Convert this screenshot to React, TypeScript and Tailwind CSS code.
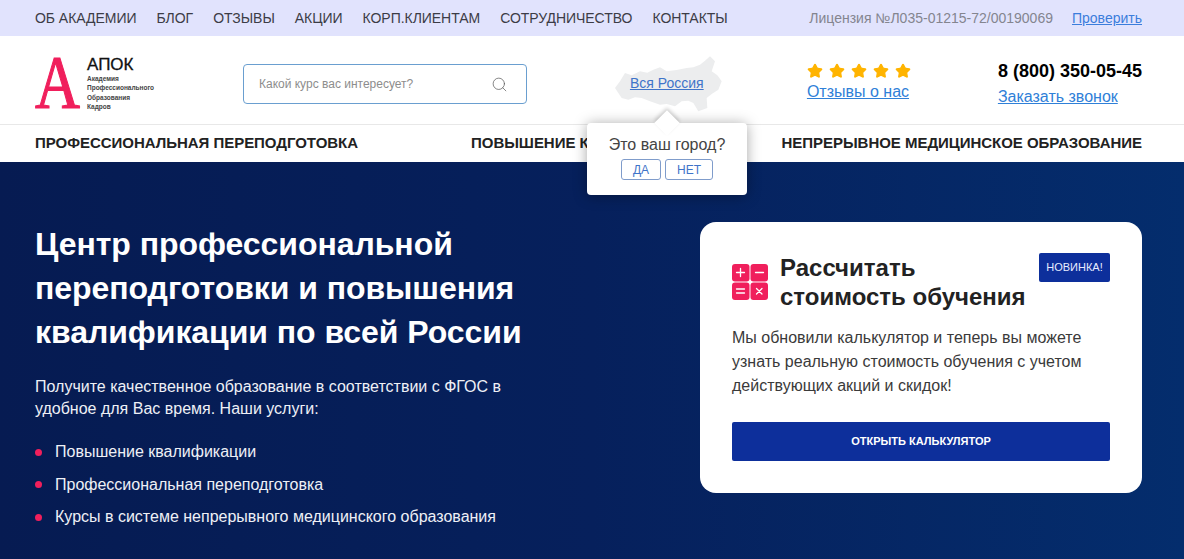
import { Search, Star } from "lucide-react";

const topLinks = ["ОБ АКАДЕМИИ", "БЛОГ", "ОТЗЫВЫ", "АКЦИИ", "КОРП.КЛИЕНТАМ", "СОТРУДНИЧЕСТВО", "КОНТАКТЫ"];
const services = [
  "Повышение квалификации",
  "Профессиональная переподготовка",
  "Курсы в системе непрерывного медицинского образования",
];

const CalcIcon = () => (
  <svg width="36" height="36" viewBox="0 0 36 36" className="shrink-0">
    <rect x="0" y="0" width="17.5" height="17.5" rx="3" fill="#f01f5c" />
    <rect x="18.5" y="0" width="17.5" height="17.5" rx="3" fill="#f01f5c" />
    <rect x="0" y="18.5" width="17.5" height="17.5" rx="3" fill="#f01f5c" />
    <rect x="18.5" y="18.5" width="17.5" height="17.5" rx="3" fill="#f01f5c" />
    <g stroke="#fff" strokeWidth="1.3" strokeLinecap="round">
      <path d="M4.5 8.5h8M8.5 4.5v8" />
      <path d="M23.5 8.5h8" />
      <path d="M4.5 25h8M4.5 29h8" />
      <path d="M24.5 24.5l5.5 5.5M30 24.5l-5.5 5.5" />
    </g>
  </svg>
);

// silhouette of the country behind the region link
const RussiaMap = () => (
  <svg width="115" height="75" viewBox="0 0 345 225" className="absolute left-[610px] top-[48px]">
    <path
      fill="#ecedee"
      d="M15 120L30 100L45 75L65 82L90 70L112 74L130 65L150 58L170 70L200 66L230 60L250 58L270 50L285 38L300 25L315 40L305 70L322 82L335 100L325 125L305 138L290 150L292 180L265 190L250 165L235 158L215 160L195 175L170 168L150 170L120 160L95 150L75 148L55 155L35 150z"
    />
  </svg>
);

export default function App() {
  return (
    <div className="relative h-[559px] w-[1184px] overflow-hidden bg-white font-['Liberation_Sans',sans-serif] text-[#333]">
      <div className="flex h-9 items-center justify-between bg-[#e1e3fd] pl-[35px] pr-[42px] text-sm">
        <div className="flex gap-5 tracking-[-0.04px] text-[#3c3c46]">
          {topLinks.map((l) => (
            <a key={l}>{l}</a>
          ))}
        </div>
        <div className="flex gap-[19px]">
          <span className="text-[#84858f]">Лицензия №Л035-01215-72/00190069</span>
          <a className="text-[#3b7ddc] underline">Проверить</a>
        </div>
      </div>

      <div className="flex h-[89px] items-start border-b border-[#e8e8e8] pl-[35px] pr-[42px]">
        <div className="mt-[19px] flex w-[208px] items-start">
          <span className="-mt-[3px] h-[56px] w-[52px] origin-left scale-x-[0.82] font-['Liberation_Serif',serif] text-[76px] leading-[60px] text-[#f01f5c] [-webkit-text-stroke:1.2px_#f01f5c]">А</span>
          <div className="flex flex-col">
            <span className="text-[17px] leading-[20px] text-[#111] [-webkit-text-stroke:0.3px_#111]">АПОК</span>
            <span className="-mt-[1px] text-[6.5px] leading-[9.4px] font-bold whitespace-nowrap text-[#444]">
              Академия
              <br />
              Профессионального
              <br />
              Образования
              <br />
              Кадров
            </span>
          </div>
        </div>
        <div className="mt-[28px] flex h-10 w-[284px] items-center justify-between rounded border border-[#6a9fd0] pl-[15px] pr-[18px]">
          <span className="text-xs text-[#8d8d8d]">Какой курс вас интересует?</span>
          <Search size={17} strokeWidth={1} className="text-[#555]" />
        </div>
        <a className="relative z-10 ml-[103px] mt-[37px] w-[177px] text-sm text-[#3f74c9] underline">Вся Россия</a>
        <div className="mt-[27px] flex w-[191px] flex-col items-start">
          <div className="flex gap-[6px]">
            {[0, 1, 2, 3, 4].map((i) => (
              <Star key={i} size={16} fill="#ffb400" stroke="#ffb400" />
            ))}
          </div>
          <a className="mt-[3px] text-base leading-5 text-[#2f80d8] underline">Отзывы о нас</a>
        </div>
        <div className="mt-[23px] flex flex-1 flex-col items-start">
          <span className="text-lg leading-6 font-bold whitespace-nowrap text-black">8 (800) 350-05-45</span>
          <a className="mt-[4px] text-base leading-5 text-[#2f80d8] underline">Заказать звонок</a>
        </div>
      </div>

      <div className="flex h-[37px] items-center pl-[35px] pr-[42px] text-[15px] font-bold tracking-[-0.03px] text-[#222]">
        <a className="w-[436px]">ПРОФЕССИОНАЛЬНАЯ ПЕРЕПОДГОТОВКА</a>
        <a>ПОВЫШЕНИЕ КВАЛИФИКАЦИИ</a>
        <a className="ml-auto">НЕПРЕРЫВНОЕ МЕДИЦИНСКОЕ ОБРАЗОВАНИЕ</a>
      </div>

      <div className="flex h-[397px] items-start justify-between bg-gradient-to-r from-[#061b52] via-[#06205c] to-[#042d6d] pl-[35px] pr-[42px] pt-[60px]">
        <div className="w-[520px] text-white">
          <h1 className="text-[32px] leading-[44px] font-bold tracking-[-0.05px]">
            Центр профессиональной
            <br />
            переподготовки и повышения
            <br />
            квалификации по всей России
          </h1>
          <p className="mt-[22px] text-base leading-[22px] text-[#eef0f6]">
            Получите качественное образование в соответствии с ФГОС в
            <br />
            удобное для Вас время. Наши услуги:
          </p>
          <ul className="mt-[16px] text-[#eef0f6]">
            {services.map((s) => (
              <li key={s} className="flex h-[32.5px] items-center gap-[13px] text-base">
                <span className="size-[7px] rounded-full bg-[#f01f5c]" />
                {s}
              </li>
            ))}
          </ul>
        </div>
        <div className="w-[442px] rounded-2xl bg-white px-8 pt-[31px] pb-8">
          <div className="flex items-start">
            <div className="mt-[11px]">
              <CalcIcon />
            </div>
            <h2 className="ml-3 flex-1 text-2xl leading-[29px] font-bold text-[#222]">
              Рассчитать
              <br />
              стоимость обучения
            </h2>
            <span className="flex h-[29px] w-[71px] items-center justify-center rounded-[2px] bg-[#0d2f9b] text-[11px] text-[#e8ecff]">
              НОВИНКА!
            </span>
          </div>
          <p className="mt-[15px] text-base leading-6 text-[#3a3a3a]">
            Мы обновили калькулятор и теперь вы можете
            <br />
            узнать реальную стоимость обучения с учетом
            <br />
            действующих акций и скидок!
          </p>
          <button className="mt-[24px] h-[39px] w-full rounded-[2px] bg-[#0d2f9b] text-[11px] font-bold text-white">
            ОТКРЫТЬ КАЛЬКУЛЯТОР
          </button>
        </div>
      </div>

      <RussiaMap />

      <div className="absolute left-[587px] top-[123px] flex h-[72px] w-[160px] flex-col items-center rounded bg-white pt-[13px] shadow-[0_1px_14px_rgba(0,0,0,0.35)]">
        <span className="absolute -top-[9px] left-[71px] size-[18px] rotate-45 bg-white shadow-[-2px_-2px_4px_rgba(0,0,0,0.18)]" />
        <span className="relative text-base leading-[18px] text-[#444]">Это ваш город?</span>
        <div className="relative mt-[5px] flex gap-1">
          <button className="h-[21px] w-10 rounded-[3px] border border-[#7f9ccb] text-xs text-[#3f74c9]">ДА</button>
          <button className="h-[21px] w-12 rounded-[3px] border border-[#7f9ccb] text-xs text-[#3f74c9]">НЕТ</button>
        </div>
      </div>
    </div>
  );
}
